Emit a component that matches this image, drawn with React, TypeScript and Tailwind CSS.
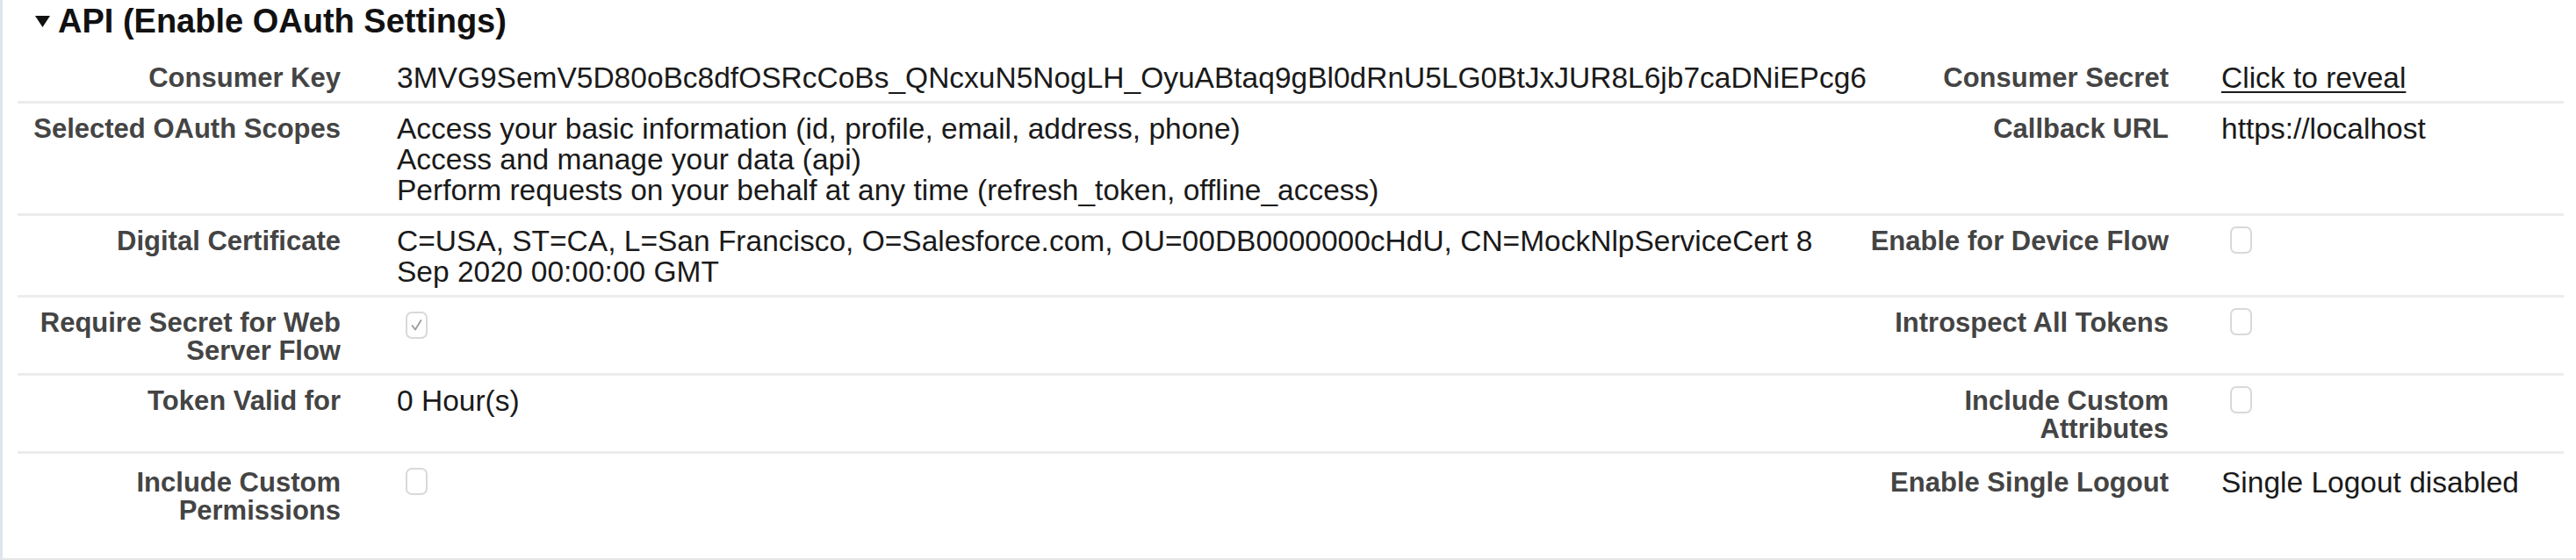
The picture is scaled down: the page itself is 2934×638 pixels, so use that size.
import React from 'react';

type Cell = { label: React.ReactNode; value: React.ReactNode };

const Checkbox = ({ checked = false }: { checked?: boolean }) => (
    <span className="mt-[1px] ml-[10px] inline-flex h-[31px] w-[25px] items-center justify-center rounded-[7px] border-2 border-[#d9d9d9] bg-white">
        {checked && (
            <svg width="15" height="17" viewBox="0 0 15 17" fill="none">
                <path d="M2.5 9 L6 13.5 L12.5 3" stroke="#9a9a9a" strokeWidth="1.8" strokeLinecap="round" strokeLinejoin="round" />
            </svg>
        )}
    </span>
);

// rows of the detail table: left pair and right pair
const rows: [Cell, Cell][] = [
    [
        { label: 'Consumer Key', value: '3MVG9SemV5D80oBc8dfOSRcCoBs_QNcxuN5NogLH_OyuABtaq9gBl0dRnU5LG0BtJxJUR8L6jb7caDNiEPcg6' },
        { label: 'Consumer Secret', value: <a className="underline decoration-[2px] underline-offset-[4px] text-[#1a1a1a]">Click to reveal</a> },
    ],
    [
        {
            label: 'Selected OAuth Scopes',
            value: (
                <>
                    <div>Access your basic information (id, profile, email, address, phone)</div>
                    <div>Access and manage your data (api)</div>
                    <div>Perform requests on your behalf at any time (refresh_token, offline_access)</div>
                </>
            ),
        },
        { label: 'Callback URL', value: 'https://localhost' },
    ],
    [
        {
            label: 'Digital Certificate',
            value: 'C=USA, ST=CA, L=San Francisco, O=Salesforce.com, OU=00DB0000000cHdU, CN=MockNlpServiceCert 8 Sep 2020 00:00:00 GMT',
        },
        { label: 'Enable for Device Flow', value: <Checkbox /> },
    ],
    [
        { label: 'Require Secret for Web Server Flow', value: <Checkbox checked /> },
        { label: 'Introspect All Tokens', value: <Checkbox /> },
    ],
    [
        { label: 'Token Valid for', value: '0 Hour(s)' },
        { label: 'Include Custom Attributes', value: <Checkbox /> },
    ],
    [
        { label: 'Include Custom Permissions', value: <Checkbox /> },
        { label: 'Enable Single Logout', value: 'Single Logout disabled' },
    ],
];

export default function App() {
    return (
        <div
            className="h-[638px] w-[2934px] overflow-hidden border-b-2 border-l-[3px] border-b-[#e6e6e6] border-l-[#dfe5ec] bg-white"
            style={{ fontFamily: '"Liberation Sans", Arial, sans-serif' }}
        >
            {/* section header */}
            <div className="flex h-[60px] items-center gap-[8px] pb-[13px] pl-[36px]">
                <svg width="19" height="16" viewBox="0 0 19 16">
                    <path d="M1 2 L18 2 L9.5 15 Z" fill="#111" />
                </svg>
                <h3 className="text-[38px] font-bold leading-[40px] text-[#111]">API (Enable OAuth Settings)</h3>
            </div>

            {/* detail list */}
            <div className="ml-[17px] mr-[14px]">
                {rows.map(([left, right], i) => (
                    <div
                        key={i}
                        className="grid grid-cols-[400px_1700px_380px_1fr] border-b-[3px] border-[#ececec] pb-[9px] pt-[11px] last:border-b-0 last:pt-[15px]"
                    >
                        <div className="mt-[2px] pr-[32px] text-right text-[31px] font-bold leading-[32px] text-[#444]">{left.label}</div>
                        <div className="pl-[32px] pr-[44px] text-[33.5px] leading-[35px] text-[#1a1a1a]">{left.value}</div>
                        <div className="mt-[2px] pl-[10px] pr-[30px] text-right text-[31px] font-bold leading-[32px] text-[#444]">{right.label}</div>
                        <div className="pl-[30px] text-[33.5px] leading-[35px] text-[#1a1a1a]">{right.value}</div>
                    </div>
                ))}
            </div>
        </div>
    );
}
